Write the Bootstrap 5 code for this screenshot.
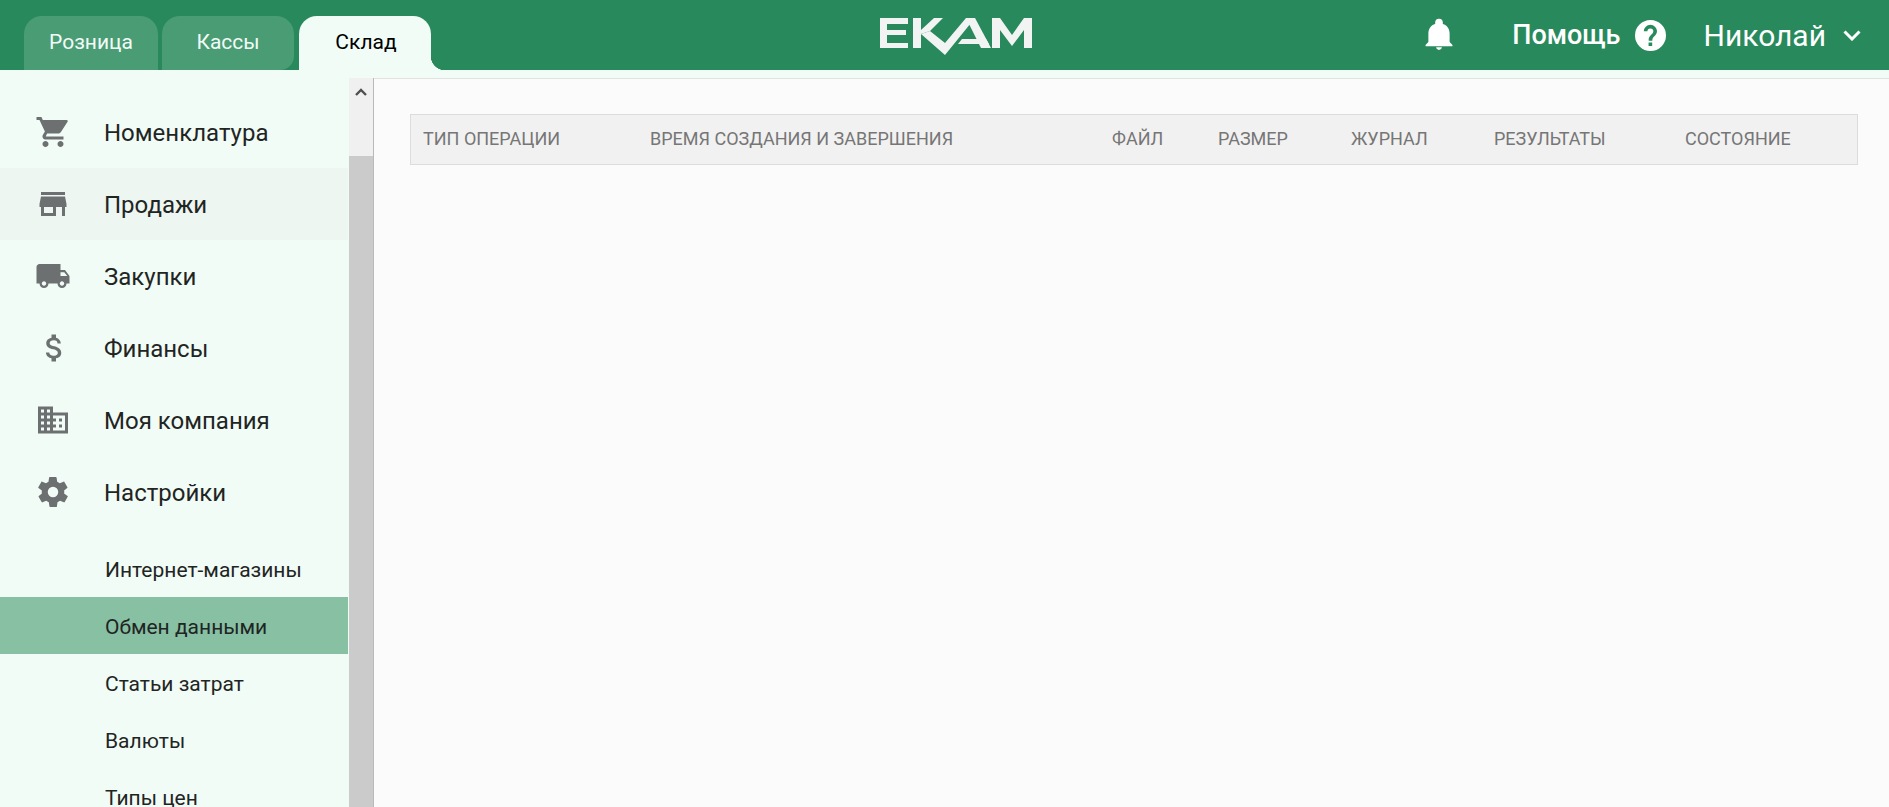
<!DOCTYPE html>
<html lang="ru">
<head>
<meta charset="utf-8">
<title>EKAM</title>
<link rel="stylesheet" href="https://cdn.jsdelivr.net/npm/bootstrap@5.3.0/dist/css/bootstrap.min.css">
<style>
html,body{height:100%;overflow:hidden}
body{font-family:Roboto,"Liberation Sans",sans-serif;background:#f2fcf7;color:#1f2523}
.app-shell{height:807px;display:flex;flex-direction:column}
.top-bar{height:70px;background:#288a5c;flex:none;position:relative}
.tab-strip{padding:16px 0 0 24px;gap:4px;height:70px}
.tab-item{width:134px;height:54px;border-radius:18px 18px 0 0;background:#4a9c75;color:#f2fcf7;font-size:21px;display:flex;align-items:center;justify-content:center;text-decoration:none}
.tab-item.second{width:132px;border-bottom-right-radius:14px}
.tab-item.current{background:#f2fcf7;color:#000;margin-left:1px;width:132px;border-radius:18px 18px 0 0;position:relative;padding-left:2px}
.tab-item.current::before,.tab-item.current::after{content:"";position:absolute;bottom:0;width:14px;height:14px}
.tab-item.current::after{left:100%;background:radial-gradient(circle at 100% 0,transparent 14px,#f2fcf7 14.5px)}
.tab-item.current::before{right:100%;background:#f2fcf7;z-index:-1}
.brand-logo{position:absolute;left:880px;top:17px}
.top-actions{position:absolute;right:0;top:0;height:70px;color:#fff}
.help-label{font-size:27px;font-weight:500;margin-left:56px;margin-right:14px}
.user-name{font-size:30px;margin-left:38px;margin-right:17px}
.chevron-ico{margin-right:28px}
.work-area{flex:1;min-height:0;display:flex}
.side-col{width:349px;flex:none;padding-top:26px;overflow:hidden}
.side-link{height:72px;display:flex;align-items:center;color:#1f2523;text-decoration:none;font-size:24px;padding-top:2px;margin-right:1px}
.side-link.soft{background:#edf6f1}
.side-ico{width:104px;flex:none;display:flex;justify-content:center;padding-left:1px}
.side-ico svg{fill:#6d7070;display:block;margin-top:-2px}
.sub-links{margin-top:12px}
.sub-link{height:57px;display:flex;align-items:center;padding-left:105px;padding-top:5px;font-size:21px;color:#1f2523;text-decoration:none;margin-right:1px}
.sub-link.chosen{background:#87c0a3}
.scroll-track{width:25px;flex:none;background:#cbcbcb;border-right:1px solid #b9b9b9;margin-top:8px;display:flex;flex-direction:column}
.scroll-top{height:78px;background:#f0f0f0;display:flex;justify-content:center;padding-top:10px}
.main-pane{flex:1;min-width:0;margin-top:8px;background:#fbfbfb;border-top:1px solid #dfe3e1;padding:35px 31px 0 36px}
.head-row{height:51px;background:#f1f1f1;border:1px solid #dcdcdc;display:flex;align-items:center;font-size:18px;color:#767676;text-transform:uppercase;white-space:nowrap;padding-bottom:2px}
.head-row span{display:block}
.w1{width:239px;padding-left:12px}.w2{width:462px}.w3{width:106px}.w4{width:133px}.w5{width:143px}.w6{width:191px}
</style>
</head>
<body>
<div class="app-shell">
  <header class="top-bar">
    <nav class="tab-strip d-flex">
      <a class="tab-item" href="#">Розница</a>
      <a class="tab-item second" href="#">Кассы</a>
      <a class="tab-item current" href="#">Склад</a>
    </nav>
    <svg class="brand-logo" width="153" height="40" viewBox="880 17 153 40" aria-label="EKAM" role="img">
      <g fill="#f1f4f2">
        <rect x="880" y="18" width="28" height="6"/><rect x="880" y="18" width="7" height="30"/><rect x="880" y="30" width="26" height="5"/><rect x="880" y="43" width="28" height="5"/>
        <rect x="913" y="18" width="8" height="30"/>
        <polygon points="921,30 934,18 943,18 930,31 921,34"/>
        <polygon points="921,34 930,31 945,43 966,18 975,18 945,55"/>
        <polygon points="962,39 986,39 989,44 958,44"/>
        <polygon points="966,18 975,18 991,48 981,48"/>
        <polygon points="992,48 992,18 1000,18 1012,35 1024,18 1032,18 1032,48 1024,48 1024,30 1012,46 1000,30 1000,48"/>
      </g>
    </svg>
    <div class="top-actions d-flex align-items-center">
      <svg width="34" height="34" viewBox="0 0 24 24" fill="#fff"><path d="M12 22.500c1.200 0 2-.8 2-1.800h-4c0 1 .9 1.800 2 1.800zm7.500-5.500v-6c0-3.400-1.800-6-4.800-6.800V3.200a2.700 2.700 0 0 0-5.400 0v1C6.300 5 4.500 7.600 4.500 11v6l-2 2v1h19v-1l-2-2z"/></svg>
      <span class="help-label">Помощь</span>
      <svg width="31" height="31" viewBox="0 0 24 24" fill="#fff"><path d="M12 0a12 12 0 1 0 0 24 12 12 0 0 0 0-24zm1.300 20.200h-2.800v-2.700h2.800zm2.600-8.600-1.100 1.200c-.9.900-1.400 1.600-1.400 3.200h-2.800v-.7c0-1.300.5-2.400 1.400-3.300l1.500-1.600c.4-.4.700-1 .7-1.600a2.300 2.300 0 0 0-4.600 0H6.800a5.100 5.100 0 0 1 10.200 0c0 1.100-.4 2.100-1.100 2.800z"/></svg>
      <span class="user-name">Николай</span>
      <svg class="chevron-ico" width="18" height="11" viewBox="0 0 18 11" fill="none" stroke="#fff" stroke-width="3"><path d="M1.500 1.500l7.500 7.500 7.500-7.500"/></svg>
    </div>
  </header>
  <div class="work-area">
    <aside class="side-col">
      <a class="side-link" href="#"><span class="side-ico"><svg width="36" height="36" viewBox="0 0 24 24"><path d="M7 18c-1.100 0-2 .9-2 2s.9 2 2 2 2-.9 2-2-.9-2-2-2zM1 2v2h2l3.600 7.600-1.400 2.400c-.7 1.400.3 3 1.800 3h12v-2H7.400c-.1 0-.2-.1-.2-.2l.9-1.800h7.500c.7 0 1.400-.4 1.700-1L21.800 5c.3-.5-.1-1-.8-1H5.200l-.9-2H1zm16 16c-1.100 0-2 .9-2 2s.9 2 2 2 2-.9 2-2-.9-2-2-2z"/></svg></span>Номенклатура</a>
      <a class="side-link soft" href="#"><span class="side-ico"><svg width="36" height="36" viewBox="0 0 24 24"><path d="M20 4H4v2h16V4zm1 10v-2l-1-5H4l-1 5v2h1v6h10v-6h4v6h2v-6h1zm-9 4H6v-4h6v4z"/></svg></span>Продажи</a>
      <a class="side-link" href="#"><span class="side-ico"><svg width="36" height="36" viewBox="0 0 24 24"><path d="M20 8h-3V4H3c-1.100 0-2 .9-2 2v11h2c0 1.700 1.300 3 3 3s3-1.300 3-3h6c0 1.700 1.300 3 3 3s3-1.300 3-3h2v-5l-3-4zM6 18.500c-.8 0-1.500-.7-1.500-1.500s.7-1.500 1.500-1.500 1.500.7 1.500 1.500-.7 1.500-1.500 1.500zm13.500-9 2 2.500H17V9.500h2.500zM18 18.500c-.8 0-1.500-.7-1.500-1.500s.7-1.500 1.500-1.500 1.500.7 1.500 1.500-.7 1.500-1.500 1.500z"/></svg></span>Закупки</a>
      <a class="side-link" href="#"><span class="side-ico"><svg width="36" height="36" viewBox="-1 0 24 24"><path d="M11.800 10.900c-2.300-.6-3-1.200-3-2.100 0-1.100 1-1.900 2.700-1.900 1.800 0 2.400.8 2.500 2.100h2.200c-.1-1.700-1.200-3.300-3.200-3.800V3h-3v2.200c-1.900.4-3.500 1.700-3.500 3.600 0 2.300 1.900 3.400 4.700 4.100 2.500.6 3 1.500 3 2.400 0 .7-.5 1.800-2.700 1.800-2.100 0-2.900-.9-3-2.100H6.300c.1 2.200 1.800 3.500 3.700 3.900V21h3v-2.100c1.900-.4 3.500-1.500 3.500-3.600 0-2.800-2.400-3.800-4.700-4.400z"/></svg></span>Финансы</a>
      <a class="side-link" href="#"><span class="side-ico"><svg width="36" height="36" viewBox="0 0 24 24"><path d="M12 7V3H2v18h20V7H12zM6 19H4v-2h2v2zm0-4H4v-2h2v2zm0-4H4V9h2v2zm0-4H4V5h2v2zm4 12H8v-2h2v2zm0-4H8v-2h2v2zm0-4H8V9h2v2zm0-4H8V5h2v2zm10 12h-8v-2h2v-2h-2v-2h2v-2h-2V9h8v10zm-2-8h-2v2h2v-2zm0 4h-2v2h2v-2z"/></svg></span>Моя компания</a>
      <a class="side-link" href="#"><span class="side-ico"><svg width="36" height="36" viewBox="0 0 24 24"><path d="M19.400 13c.1-.3.1-.7.1-1s0-.7-.1-1l2.100-1.600c.2-.2.2-.4.100-.6l-2-3.500c-.1-.2-.4-.3-.6-.2l-2.500 1c-.5-.4-1.100-.7-1.700-1l-.4-2.600c0-.3-.2-.5-.5-.5h-4c-.3 0-.5.2-.5.400l-.4 2.700c-.6.200-1.100.6-1.700 1l-2.500-1c-.2-.1-.5 0-.6.200l-2 3.500c-.1.200-.1.400.1.600L4.600 11c-.1.300-.1.700-.1 1s0 .7.1 1l-2.100 1.600c-.2.200-.2.400-.1.600l2 3.500c.1.200.4.300.6.200l2.500-1c.5.400 1.100.7 1.700 1l.4 2.600c0 .3.2.5.500.5h4c.3 0 .5-.2.500-.4l.4-2.700c.6-.2 1.200-.6 1.700-1l2.500 1c.2.100.5 0 .6-.2l2-3.500c.1-.2.1-.4-.1-.6L19.400 13zM12 15.500a3.500 3.500 0 1 1 0-7 3.500 3.500 0 0 1 0 7z"/></svg></span>Настройки</a>
      <div class="sub-links">
        <a class="sub-link" href="#">Интернет-магазины</a>
        <a class="sub-link chosen" href="#">Обмен данными</a>
        <a class="sub-link" href="#">Статьи затрат</a>
        <a class="sub-link" href="#">Валюты</a>
        <a class="sub-link" href="#">Типы цен</a>
      </div>
    </aside>
    <div class="scroll-track">
      <div class="scroll-top"><svg width="12" height="8" viewBox="0 0 12 8" fill="none" stroke="#505050" stroke-width="2.400"><path d="M1 7l5-5 5 5"/></svg></div>
    </div>
    <main class="main-pane">
      <div class="head-row">
        <span class="w1">Тип операции</span><span class="w2">Время создания и завершения</span><span class="w3">Файл</span><span class="w4">Размер</span><span class="w5">Журнал</span><span class="w6">Результаты</span><span>Состояние</span>
      </div>
    </main>
  </div>
</div>
<script src="https://cdn.jsdelivr.net/npm/bootstrap@5.3.0/dist/js/bootstrap.bundle.min.js"></script>
</body>
</html>
